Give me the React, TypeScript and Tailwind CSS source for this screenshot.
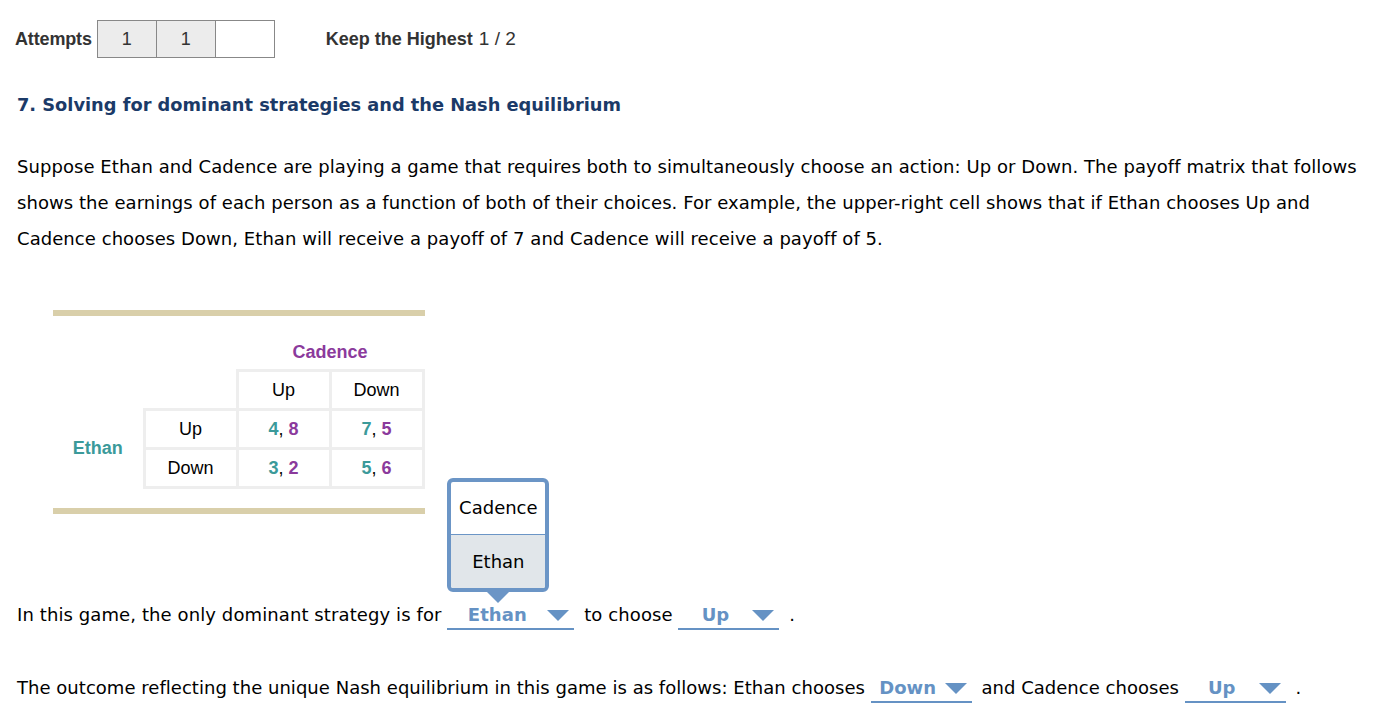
import type { ReactNode } from 'react';

const teal = 'text-[#3b9a9a]';
const purple = 'text-[#8b3a9c]';

function Caret() {
  return (
    <svg width="22" height="11" viewBox="0 0 22 11" className="shrink-0">
      <path d="M0 0 L22 0 L11 11 Z" fill="#6592c4" />
    </svg>
  );
}

function Select({ value, width, children }: { value: string; width: string; children?: ReactNode }) {
  return (
    <span className={`relative inline-flex items-center h-[28px] mr-[4px] align-middle border-b-2 border-[#6592c4] ${width}`}>
      <span className="flex-1 text-center font-bold text-[#6592c4]">{value}</span>
      <span className="pr-[5px] flex items-center">
        <Caret />
      </span>
      {children}
    </span>
  );
}

function Popup() {
  return (
    <div className="absolute left-0 bottom-[25px] w-[102px] tracking-normal">
      <div className="rounded-[6px] border-4 border-[#6b95c6] bg-white overflow-hidden text-black font-normal">
        <div className="h-[53px] flex items-center justify-center border-b border-[#6b95c6]">Cadence</div>
        <div className="h-[53px] flex items-center justify-center bg-[#e1e6ea]">Ethan</div>
      </div>
      <div className="flex justify-center">
        <svg width="22" height="11" viewBox="0 0 22 11">
          <path d="M0 0 L22 0 L11 11 Z" fill="#6b95c6" />
        </svg>
      </div>
    </div>
  );
}

function Payoff({ a, b }: { a: number; b: number }) {
  return (
    <span className="font-bold">
      <span className={teal}>{a}</span>
      <span className="font-normal text-black">, </span>
      <span className={purple}>{b}</span>
    </span>
  );
}

export default function App() {
  const cell = 'border-[3px] border-[#eeeeee] w-[93px] h-[39px] text-center p-0';
  return (
    <div className="bg-white min-h-[728px] text-black font-['DejaVu_Sans',Verdana,sans-serif] text-[18px]">
      <div className="flex items-center pl-[15px] pt-[20px] font-['Liberation_Sans',Arial,sans-serif] text-[18px] text-[#333]">
        <span className="font-bold mr-[5px] tracking-[-0.15px]">Attempts</span>
        <div className="flex border border-[#888]">
          <div className="w-[59px] h-[36px] flex items-center justify-center bg-[#ececec] border-r border-[#888]">1</div>
          <div className="w-[59px] h-[36px] flex items-center justify-center bg-[#ececec] border-r border-[#888]">1</div>
          <div className="w-[58px] h-[36px] bg-white" />
        </div>
        <span className="ml-[51px] font-bold">Keep the Highest</span>
        <span className="ml-[6px] text-[19px]">1 / 2</span>
      </div>

      <h2 className="pl-[17px] mt-[34px] font-bold text-[17.8px] text-[#1b3a68]">
        7. Solving for dominant strategies and the Nash equilibrium
      </h2>

      <p className="pl-[17px] pr-[20px] mt-[30px] leading-[36px] tracking-[0.06px]">
        Suppose Ethan and Cadence are playing a game that requires both to simultaneously choose an action: Up or Down.
        The payoff matrix that follows shows the earnings of each person as a function of both of their choices. For
        example, the upper-right cell shows that if Ethan chooses Up and Cadence chooses Down, Ethan will receive a
        payoff of 7 and Cadence will receive a payoff of 5.
      </p>

      <div className="ml-[53px] mt-[53px] w-[372px] font-['Liberation_Sans',Arial,sans-serif] text-[18px]">
        <div className="h-[6px] bg-[#d9cfaa]" />
        <table className="mt-[23px] border-collapse">
          <tbody>
            <tr>
              <td className="w-[91px] p-0" />
              <td className="w-[93px] p-0" />
              <td colSpan={2} className={`text-center font-bold h-[32px] align-top p-0 ${purple}`}>Cadence</td>
            </tr>
            <tr>
              <td className="p-0" />
              <td className="p-0" />
              <td className={cell}>Up</td>
              <td className={cell}>Down</td>
            </tr>
            <tr>
              <td rowSpan={2} className={`text-center font-bold p-0 ${teal}`}>Ethan</td>
              <td className={cell}>Up</td>
              <td className={cell}><Payoff a={4} b={8} /></td>
              <td className={cell}><Payoff a={7} b={5} /></td>
            </tr>
            <tr>
              <td className={cell}>Down</td>
              <td className={cell}><Payoff a={3} b={2} /></td>
              <td className={cell}><Payoff a={5} b={6} /></td>
            </tr>
          </tbody>
        </table>
        <div className="mt-[19px] h-[6px] bg-[#d9cfaa]" />
      </div>

      <p className="pl-[17px] mt-[87px] leading-[28px] tracking-[0.1px]">
        In this game, the only dominant strategy is for{' '}
        <Select value="Ethan" width="w-[127px]">
          <Popup />
        </Select>{' '}
        to choose <Select value="Up" width="w-[101px]" /> .
      </p>

      <p className="pl-[17px] mt-[44px] leading-[28px] tracking-[0.03px]">
        The outcome reflecting the unique Nash equilibrium in this game is as follows: Ethan chooses{' '}
        <Select value="Down" width="w-[101px]" /> and Cadence chooses <Select value="Up" width="w-[101px]" /> .
      </p>
    </div>
  );
}
